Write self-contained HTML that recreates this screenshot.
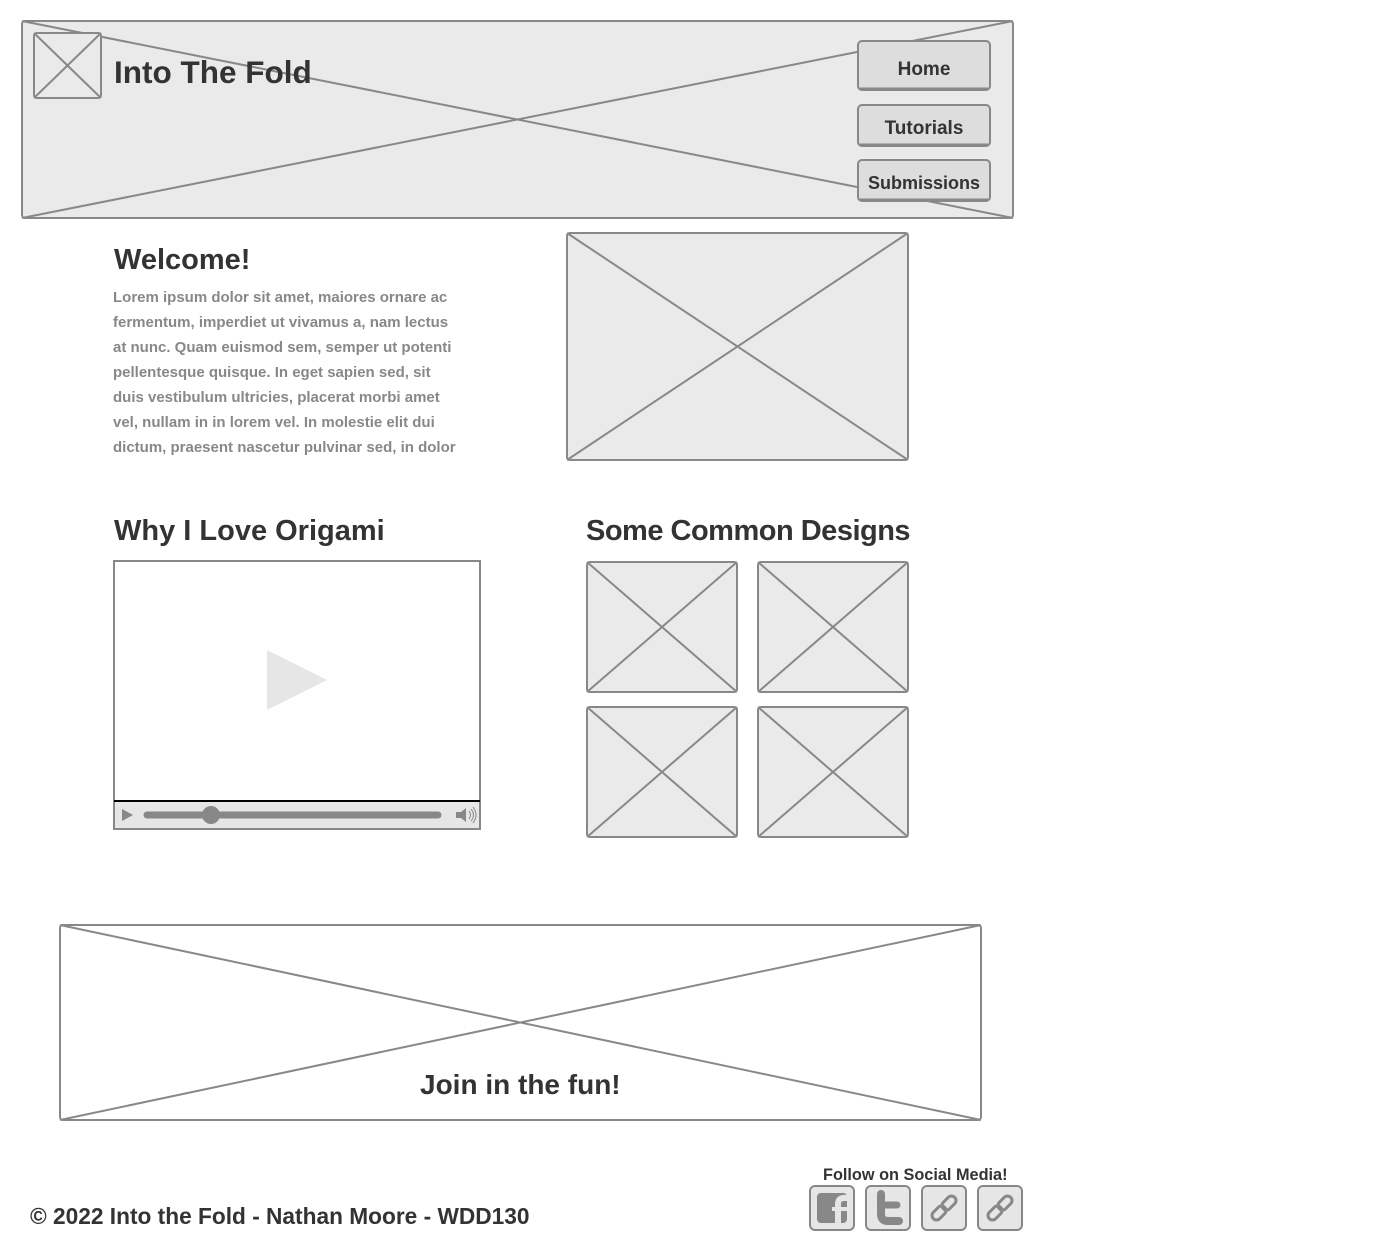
<!DOCTYPE html>
<html><head><meta charset="utf-8"><style>
body{margin:0;width:1384px;height:1251px;background:#fff;position:relative;overflow:hidden;font-family:"Liberation Sans",sans-serif;font-weight:bold;color:#333}
svg{position:absolute;left:0;top:0}
.t{position:absolute;white-space:nowrap}
.btn{position:absolute;left:858px;width:132px;text-align:center;font-size:19px;color:#333}
p{position:absolute;margin:0;left:113px;top:285px;white-space:nowrap;font-size:15px;line-height:25px;color:#888;font-weight:bold;letter-spacing:0}
</style></head><body>
<svg width="1384" height="1251" fill="none" stroke="#888" stroke-width="2">
<rect x="22" y="21" width="991" height="197" rx="3" fill="#eaeaea"/>
<line x1="22" y1="21" x2="1013" y2="218"/><line x1="22" y1="218" x2="1013" y2="21"/>
<rect x="34" y="33" width="67" height="65" rx="3" fill="#eaeaea"/>
<line x1="34" y1="33" x2="101" y2="98"/><line x1="34" y1="98" x2="101" y2="33"/>
<rect x="858" y="41" width="132" height="49" rx="4" fill="#ddd"/><line x1="860" y1="89" x2="988" y2="89" stroke-width="3"/>
<rect x="858" y="105" width="132" height="41" rx="4" fill="#ddd"/><line x1="860" y1="145" x2="988" y2="145" stroke-width="3"/>
<rect x="858" y="160" width="132" height="41" rx="4" fill="#ddd"/><line x1="860" y1="200" x2="988" y2="200" stroke-width="3"/>
<rect x="567" y="233" width="341" height="227" rx="3" fill="#eaeaea"/>
<line x1="567" y1="233" x2="908" y2="460"/><line x1="567" y1="460" x2="908" y2="233"/>
<rect x="114" y="561" width="366" height="268" fill="#fff"/>
<polygon points="267,650 267,710 327,680" fill="#e6e6e6" stroke="none"/>
<rect x="115" y="801" width="364" height="27" fill="#e6e6e6" stroke="none"/>
<line x1="114" y1="801" x2="480" y2="801" stroke="#000"/>
<polygon points="122,809 122,821 133,815" fill="#888" stroke="none"/>
<line x1="147" y1="815" x2="438" y2="815" stroke-width="7" stroke-linecap="round"/>
<circle cx="211" cy="815" r="9" fill="#888" stroke="none"/>
<polygon points="456,812 461,812 466,808 466,822 461,818 456,818" fill="#888" stroke="none"/>
<path d="M469 811q3 4 0 8M471 809q5 6 0 12M473 807q6 8 0 16" stroke-width="1"/>
<g fill="#eaeaea">
<rect x="587" y="562" width="150" height="130" rx="3"/><line x1="587" y1="562" x2="737" y2="692"/><line x1="587" y1="692" x2="737" y2="562"/>
<rect x="758" y="562" width="150" height="130" rx="3"/><line x1="758" y1="562" x2="908" y2="692"/><line x1="758" y1="692" x2="908" y2="562"/>
<rect x="587" y="707" width="150" height="130" rx="3"/><line x1="587" y1="707" x2="737" y2="837"/><line x1="587" y1="837" x2="737" y2="707"/>
<rect x="758" y="707" width="150" height="130" rx="3"/><line x1="758" y1="707" x2="908" y2="837"/><line x1="758" y1="837" x2="908" y2="707"/>
</g>
<rect x="60" y="925" width="921" height="195" rx="3" fill="#fff"/>
<line x1="60" y1="925" x2="981" y2="1120"/><line x1="60" y1="1120" x2="981" y2="925"/>
<g fill="#e6e6e6">
<rect x="810" y="1186" width="44" height="44" rx="5"/><rect x="866" y="1186" width="44" height="44" rx="5"/>
<rect x="922" y="1186" width="44" height="44" rx="5"/><rect x="978" y="1186" width="44" height="44" rx="5"/>
</g>
<rect x="817" y="1193" width="30" height="30" rx="4" fill="#888" stroke="none"/>
<path d="M838 1224V1204q0-6 6-6h3" stroke="#e6e6e6" stroke-width="6"/>
<line x1="832" y1="1209" x2="847" y2="1209" stroke="#e6e6e6" stroke-width="4"/>
<path d="M881 1194v20q0 7 7 7h11" stroke-width="8" stroke-linecap="round"/>
<line x1="881" y1="1205" x2="897" y2="1205" stroke-width="7" stroke-linecap="round"/>
<g stroke-width="3">
<rect x="-4.5" y="-8" width="9" height="16" rx="4.5" transform="translate(939,1213) rotate(45)"/>
<rect x="-4.5" y="-8" width="9" height="16" rx="4.5" transform="translate(949,1203) rotate(45)"/>
<rect x="-4.5" y="-8" width="9" height="16" rx="4.5" transform="translate(995,1213) rotate(45)"/>
<rect x="-4.5" y="-8" width="9" height="16" rx="4.5" transform="translate(1005,1203) rotate(45)"/>
</g>
</svg>
<div class="t" style="left:114px;top:54px;font-size:31.5px">Into The Fold</div>
<div class="btn" style="top:59px">Home</div>
<div class="btn" style="top:118px">Tutorials</div>
<div class="btn" style="top:173px;font-size:18px">Submissions</div>
<div class="t" style="left:114px;top:244px;font-size:29px">Welcome!</div>
<p>Lorem ipsum dolor sit amet, maiores ornare ac<br>fermentum, imperdiet ut vivamus a, nam lectus<br>at nunc. Quam euismod sem, semper ut potenti<br>pellentesque quisque. In eget sapien sed, sit<br>duis vestibulum ultricies, placerat morbi amet<br>vel, nullam in in lorem vel. In molestie elit dui<br>dictum, praesent nascetur pulvinar sed, in dolor</p>
<div class="t" style="left:114px;top:515px;font-size:29px">Why I Love Origami</div>
<div class="t" style="left:586px;top:515px;font-size:29px;letter-spacing:-0.5px">Some Common Designs</div>
<div class="t" style="left:420px;top:1069px;font-size:28px">Join in the fun!</div>
<div class="t" style="left:823px;top:1166px;font-size:16.3px">Follow on Social Media!</div>
<div class="t" style="left:30px;top:1203px;font-size:22.7px">© 2022 Into the Fold - Nathan Moore - WDD130</div>
</body></html>
